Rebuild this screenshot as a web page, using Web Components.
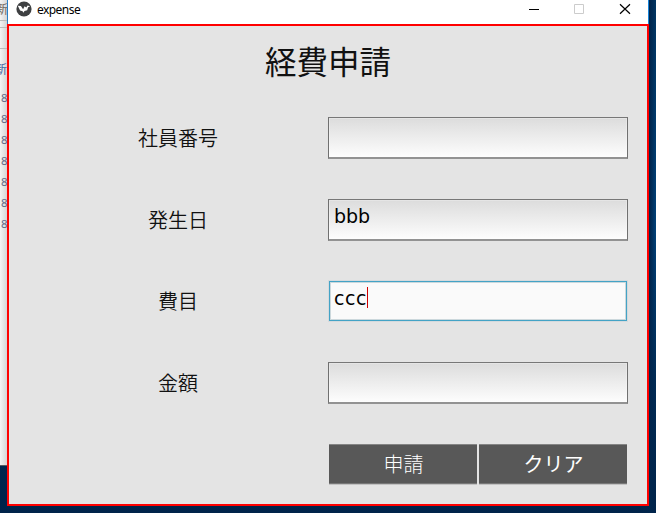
<!DOCTYPE html>
<html lang="ja"><head><meta charset="utf-8"><title>expense</title>
<style>html,body{margin:0;width:656px;height:519px;overflow:hidden;background:#fff;font-family:"Noto Sans CJK JP",sans-serif}</style></head>
<body><desk-top></desk-top>
<script>
const define=(name,html,after)=>customElements.define(name,class extends HTMLElement{
 constructor(){super();this.attachShadow({mode:'open'}).innerHTML=html}
 connectedCallback(){after&&after(this)}
});
define('back-window',`<style>
:host{display:block;width:7px;height:466px;overflow:hidden;background:linear-gradient(90deg,#f4f4f4,#d5d5d5);border-bottom:1px solid #565b62;box-sizing:border-box;font:11.500px/21px "Noto Sans","Noto Sans CJK JP",sans-serif;color:#626887}
.tab{height:20px;line-height:19px;margin-left:-4px;font-size:12px;color:#6e655c;border-bottom:1px solid #bbb;white-space:nowrap}
.bar{height:6px;border-bottom:1px solid #bbb}.bar.b{height:20px}
.link{height:38px;line-height:41px;margin-left:-5px;font-size:12px;color:#3e64a0;white-space:nowrap}
.n{height:21px;padding-left:1px}
</style><div class="tab">新</div><div class="bar"></div><div class="bar b"></div><div class="link">新</div>
<div class="n">8</div><div class="n">8</div><div class="n">8</div><div class="n">8</div><div class="n">8</div><div class="n">8</div><div class="n">8</div>`);
define('title-bar',`<style>
:host{display:flex;height:24px;box-sizing:border-box;background:#fff;border-left:1px solid #2680c8;border-right:1px solid #1883d7;align-items:flex-start;color:#000}
svg{display:block;flex:none}.t{font:12px/20px "Noto Sans",sans-serif;letter-spacing:-.55px;margin-left:5px;flex:1}
.logo{margin:1px 0 0 8px}.ctl{margin-right:16px}
</style><svg class="logo" width="16" height="16" viewBox="0 0 16 16"><circle cx="8" cy="8" r="7.6" fill="#3e4042"/><path d="M1.800 4.800l3.100.2 2.200 3.300 1.500-3.100 1.700 1.400 1.300-2 2.600.6-2.100 1.100-.9 3-2.700.7-1.100 1.700-.8-1.500-2.500-.6z" fill="#fff"/></svg>
<span class="t"><slot></slot></span>
<svg class="ctl" width="103" height="20" viewBox="0 0 103 20" fill="none"><path d="M0 9.5h10" stroke="#000"/><path d="M45.500 4.500h9v9h-9z" stroke="#ccc"/><path d="M91 4.300l10 9.400M101 4.300l-10 9.400" stroke="#000" stroke-width="1.200"/></svg>`);
define('text-field',`<style>
:host{display:block;box-sizing:border-box;width:300px;height:42px;border:1px solid #707070;border-top-color:#777;border-bottom:2px solid #929292;background:linear-gradient(#dcdcdc,#fdfdfd);box-shadow:inset 0 0 0 1px #ffffff40;color:#000;font:19px/34px "DejaVu Sans",sans-serif;padding-left:5px}
:host([focused]){width:298px;height:40px;margin:0 1px;background:#fafafa;border:1px solid #43a3c6;box-shadow:inset 0 0 0 1px #ccd8dc,0 0 0 1px #d5dadd;padding-left:4px;line-height:34px;letter-spacing:.5px}
.line{display:flex;align-items:center;margin-top:-1px}i{display:none;width:1px;height:21px;background:#d00000;margin-top:-2px}:host([focused]) i{display:block}
</style><div class="line"><slot></slot><i></i></div>`);
define('form-row',`<style>
:host{display:grid;grid-template-columns:319px 319px;align-items:center;height:81.7px;color:#111}
.l{font-size:20px;font-weight:350;line-height:30px;text-align:center;padding-left:19px}
</style><div class="l"></div><div><slot></slot></div>`,h=>h.shadowRoot.querySelector('.l').textContent=h.getAttribute('label'));
define('push-button',`<style>
:host{display:block;width:148px;height:40px;box-sizing:border-box;background:#585858;border-top:1px solid #858585;border-bottom:1px solid #777;box-shadow:0 1px #c2c2c2;color:#fff;text-align:center;font-size:20px;font-weight:300;line-height:37px;padding-left:1px}
</style><slot></slot>`);
define('expense-form',`<style>
:host{display:block;box-sizing:border-box;width:642px;height:482px;border:2px solid #f00;background:#e4e4e4;overflow:hidden}
h1{margin:0;height:71px;line-height:68px;font-size:31.500px;font-weight:400;text-align:center;color:#111}
.actions{display:flex;gap:2px;margin-left:320px;padding-top:20px}
</style><h1>経費申請</h1>
<form-row label="社員番号"><text-field></text-field></form-row>
<form-row label="発生日"><text-field>bbb</text-field></form-row>
<form-row label="費目"><text-field focused>ccc</text-field></form-row>
<form-row label="金額"><text-field></text-field></form-row>
<div class="actions"><push-button>申請</push-button><push-button style="font-weight:400">クリア</push-button></div>`);
define('desk-top',`<style>
:host{display:flex;width:656px;height:513px;overflow:hidden;background:linear-gradient(90deg,transparent 640px,#00254c 650px,transparent 656px),linear-gradient(#003562,#00427b 45%,#002b55 75%,#00234a)}
.w{width:642px;flex:none}
</style><back-window></back-window><div class="w"><title-bar>expense</title-bar><expense-form></expense-form></div>`);
</script></body></html>
